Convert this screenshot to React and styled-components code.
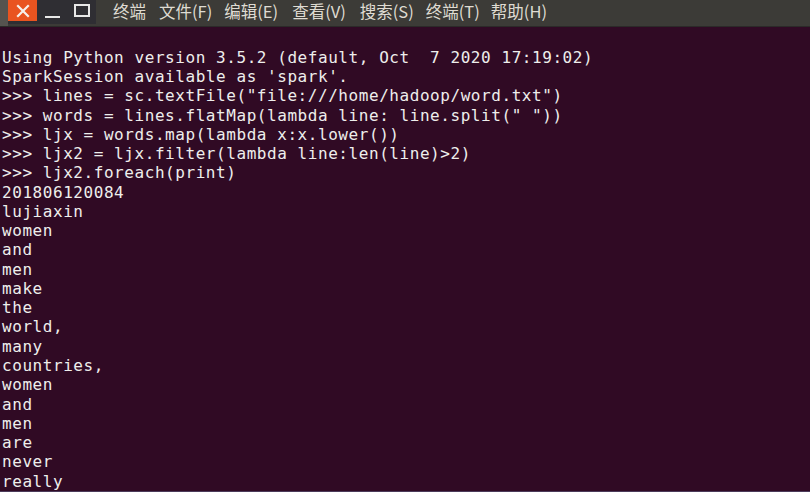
import React from "react";
import styled, { createGlobalStyle } from "styled-components";

const Global = createGlobalStyle`
  html, body { margin: 0; padding: 0; background: #300a24; overflow: hidden; }
  #root { width: 810px; height: 492px; }
`;

const Window = styled.div`
  width: 810px;
  height: 492px;
  display: flex;
  flex-direction: column;
  background: #300a24;
  overflow: hidden;
`;

const TitleBar = styled.div`
  height: 26px;
  flex: none;
  display: flex;
  align-items: flex-start;
  background: #3c3b37;
  border-bottom: 1px solid #2b2a28;
`;

const LeftEdge = styled.div`
  width: 8px;
  height: 26px;
  background: #55534f;
`;

const Controls = styled.div`
  width: 88px;
  height: 24px;
  display: flex;
  align-items: flex-start;
  background: #2f2e33;
`;

const Ctl = styled.div`
  width: ${p => p.$w}px;
  height: 21px;
  display: flex;
  align-items: center;
  justify-content: center;
  background: ${p => p.$bg || "transparent"};
`;

const Menu = styled.div`
  display: flex;
  align-items: center;
  height: 22px;
  margin-left: 17px;
  font-family: "Noto Sans CJK SC", "Noto Sans", sans-serif;
  font-size: 16.5px;
  color: #dfdbd2;
`;

const MenuItem = styled.span`
  margin-right: ${p => p.$mr}px;
  white-space: pre;
`;

const Term = styled.pre`
  margin: 0;
  padding: 1.5px 0 0 2px;
  flex: 1;
  font-family: "DejaVu Sans Mono", "Liberation Mono", monospace;
  font-size: 16px;
  letter-spacing: 0.56px;
  line-height: 19.27px;
  color: #eeeeec;
  white-space: pre;
`;

const BottomLine = styled.div`
  height: 1px;
  flex: none;
  background: #4b3a5a;
`;

const lines = [
  "",
  "Using Python version 3.5.2 (default, Oct  7 2020 17:19:02)",
  "SparkSession available as 'spark'.",
  '>>> lines = sc.textFile("file:///home/hadoop/word.txt")',
  '>>> words = lines.flatMap(lambda line: line.split(" "))',
  ">>> ljx = words.map(lambda x:x.lower())",
  ">>> ljx2 = ljx.filter(lambda line:len(line)>2)",
  ">>> ljx2.foreach(print)",
  "201806120084",
  "lujiaxin",
  "women",
  "and",
  "men",
  "make",
  "the",
  "world,",
  "many",
  "countries,",
  "women",
  "and",
  "men",
  "are",
  "never",
  "really",
];

const menu = [
  ["终端", 13],
  ["文件(F)", 12],
  ["编辑(E)", 14],
  ["查看(V)", 14],
  ["搜索(S)", 12],
  ["终端(T)", 11],
  ["帮助(H)", 0],
];

export default function App() {
  return (
    <>
      <Global />
      <Window>
        <TitleBar>
          <LeftEdge />
          <Controls>
            <Ctl $w={29} $bg="#e95420">
              <svg width="14" height="14" viewBox="0 0 14 14">
                <path d="M2 2 L12 12 M12 2 L2 12" stroke="#f6f0ea" strokeWidth="2.2" strokeLinecap="square" />
              </svg>
            </Ctl>
            <Ctl $w={30}>
              <svg width="18" height="16" viewBox="0 0 18 16">
                <rect x="2" y="13" width="15" height="2" fill="#e8e8e8" />
              </svg>
            </Ctl>
            <Ctl $w={29}>
              <svg width="18" height="16" viewBox="0 0 18 16">
                <rect x="2" y="2" width="14" height="11" fill="none" stroke="#e8e8e8" strokeWidth="2" />
              </svg>
            </Ctl>
          </Controls>
          <Menu>
            {menu.map(([t, mr], i) => (
              <MenuItem key={i} $mr={mr}>{t}</MenuItem>
            ))}
          </Menu>
        </TitleBar>
        <Term>{lines.join("\n")}</Term>
        <BottomLine />
      </Window>
    </>
  );
}
